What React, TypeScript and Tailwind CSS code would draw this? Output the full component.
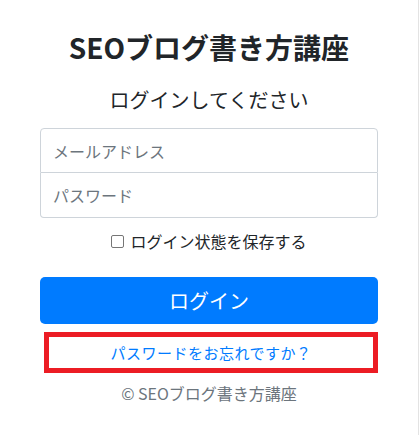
import React from "react";

export default function App() {
  const font = { fontFamily: '"Noto Sans CJK JP", "Noto Sans", sans-serif' };
  return (
    <div
      className="w-[419px] h-[435px] bg-white border-r border-[#e3e3e3] text-[#212529] overflow-hidden"
      style={font}
    >
      <div className="w-[338px] ml-[40px] pt-[30px] flex flex-col items-center">
        <h1 className="text-[28px] leading-[34px] font-bold tracking-[0px]">SEOブログ書き方講座</h1>
        <h2 className="mt-[24px] text-[20px] leading-[24px] font-normal">ログインしてください</h2>
        <div className="mt-[16px] w-full flex flex-col">
          <div className="h-[45px] border border-[#ced4da] rounded-t-[4px] flex items-center px-[12px] text-[16px] text-[#6c757d]">
            メールアドレス
          </div>
          <div className="h-[45px] border border-t-0 border-[#ced4da] rounded-b-[4px] flex items-center px-[12px] text-[16px] text-[#6c757d]">
            パスワード
          </div>
        </div>
        <div className="mt-[11px] h-[24px] flex items-center text-[16px] leading-[24px]">
          <span className="inline-block w-[13px] h-[13px] border border-[#767676] rounded-[2px] bg-white mr-[6px]" />
          <span>ログイン状態を保存する</span>
        </div>
        <button className="mt-[24px] w-full h-[47px] rounded-[5px] bg-[#007bff] text-white text-[20px] leading-[30px] flex items-center justify-center">
          ログイン
        </button>
        <div className="mt-[8px] ml-[4px] w-[334px] h-[41px] border-[5px] border-[#ec1c24] flex items-center justify-center">
          <span className="text-[15px] text-[#007bff] leading-[24px] tracking-[0.5px]">パスワードをお忘れですか？</span>
        </div>
        <p className="mt-[8px] text-[16px] leading-[24px] text-[#6c757d]">© SEOブログ書き方講座</p>
      </div>
    </div>
  );
}
